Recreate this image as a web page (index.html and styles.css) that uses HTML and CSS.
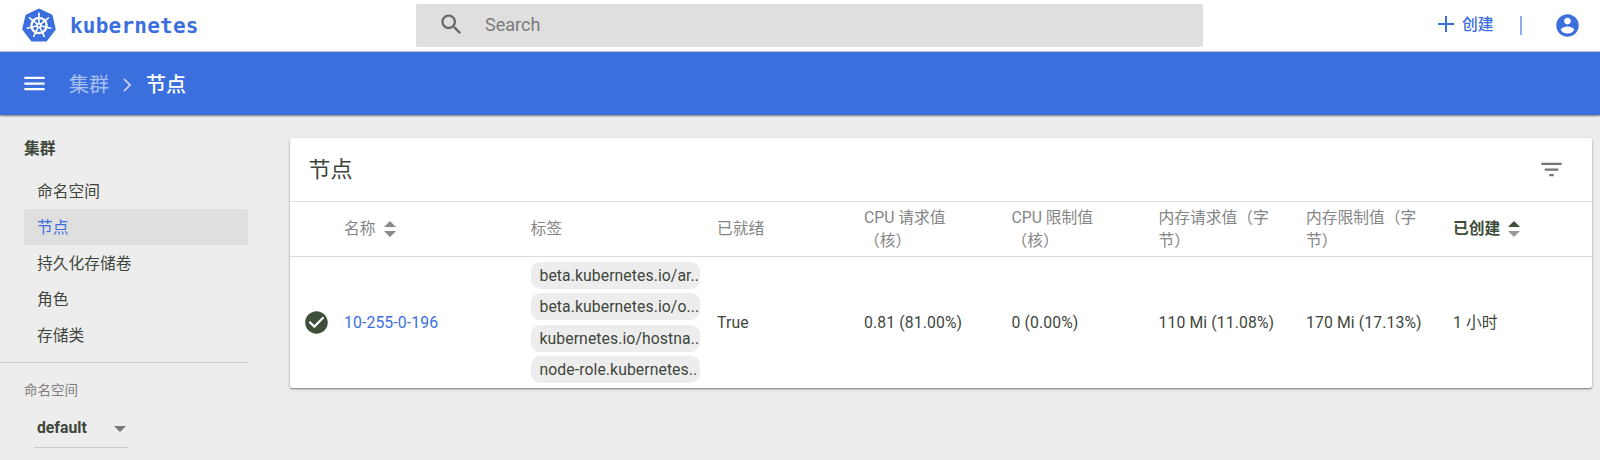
FILE: index.html
```html
<!DOCTYPE html>
<html lang="zh-CN">
<head>
<meta charset="utf-8">
<title>Kubernetes Dashboard</title>
<link rel="stylesheet" href="styles.css">
</head>
<body>
<header class="topbar">
  <div class="brand">
    <svg class="logo" viewBox="0 0 34 34">
      <path fill="#3b6fde" stroke="#3b6fde" stroke-width="3" stroke-linejoin="round" d="M17 2 29.1 7.8 32.2 21 23.8 32H10.2L1.8 21 4.9 7.8z"/>
      <g fill="none" stroke="#fff">
        <circle cx="17" cy="17.5" r="7.6" stroke-width="2.4"/>
        <g stroke-width="1.6" stroke-linecap="round">
          <path d="M17 15V5.4"/>
          <path d="M17 15V5.4" transform="rotate(51.43 17 17.5)"/>
          <path d="M17 15V5.4" transform="rotate(102.86 17 17.5)"/>
          <path d="M17 15V5.4" transform="rotate(154.29 17 17.5)"/>
          <path d="M17 15V5.4" transform="rotate(205.71 17 17.5)"/>
          <path d="M17 15V5.4" transform="rotate(257.14 17 17.5)"/>
          <path d="M17 15V5.4" transform="rotate(308.57 17 17.5)"/>
        </g>
      </g>
      <circle cx="17" cy="17.5" r="2.8" fill="#fff"/>
      <circle cx="17" cy="17.5" r="1" fill="#3b6fde"/>
    </svg>
    <span class="wordmark">kubernetes</span>
  </div>
  <div class="search">
    <svg class="icon-27" viewBox="0 0 24 24"><path fill="#666" d="M15.5 14h-.79l-.28-.27C15.41 12.59 16 11.11 16 9.5 16 5.91 13.09 3 9.5 3S3 5.91 3 9.5 5.91 16 9.5 16c1.61 0 3.09-.59 4.23-1.57l.27.28v.79l5 4.99L20.49 19l-4.99-5zm-6 0C7.01 14 5 11.99 5 9.5S7.01 5 9.5 5 14 7.01 14 9.5 11.99 14 9.5 14z"/></svg>
    <span class="search-text">Search</span>
  </div>
  <div class="actions">
    <svg class="plus" viewBox="0 0 16 16"><path fill="none" stroke="#3b6fde" stroke-width="2" d="M8 0v16M0 8h16"/></svg>
    <span class="create">创建</span>
    <span class="divider"></span>
    <svg class="icon-27" viewBox="0 0 24 24"><path fill="#3b6fde" d="M12 2C6.48 2 2 6.48 2 12s4.48 10 10 10 10-4.48 10-10S17.52 2 12 2zm0 3c1.66 0 3 1.34 3 3s-1.34 3-3 3-3-1.34-3-3 1.34-3 3-3zm0 14.2c-2.5 0-4.71-1.28-6-3.22.03-1.99 4-3.08 6-3.08 1.99 0 5.97 1.09 6 3.08-1.29 1.94-3.5 3.22-6 3.22z"/></svg>
  </div>
</header>
<nav class="crumbs">
  <svg class="icon-27" viewBox="0 0 24 24"><path fill="#fff" d="M3 18h18v-2H3v2zm0-5h18v-2H3v2zm0-7v2h18V6H3z"/></svg>
  <span class="crumb-parent">集群</span>
  <svg class="chevron" viewBox="0 0 8 14"><path fill="none" stroke="#fff" stroke-opacity=".75" stroke-width="1.7" d="M1 1l6 6-6 6"/></svg>
  <span class="crumb-current">节点</span>
</nav>
<div class="layout">
  <aside class="sidebar">
    <div class="side-title">集群</div>
    <ul class="menu">
      <li>命名空间</li>
      <li class="active">节点</li>
      <li>持久化存储卷</li>
      <li>角色</li>
      <li>存储类</li>
    </ul>
    <div class="side-rule"></div>
    <div class="ns-label">命名空间</div>
    <div class="select"><span>default</span><span class="caret"></span></div>
  </aside>
  <main class="card">
    <div class="card-head">
      <h2>节点</h2>
      <svg class="icon-27" viewBox="0 0 24 24"><path fill="#747474" d="M10 18h4v-2h-4v2zM3 6v2h18V6H3zm3 7h12v-2H6v2z"/></svg>
    </div>
    <div class="row head-row">
      <div></div>
      <div class="sortable">名称<svg class="sort" viewBox="0 0 12 16"><path fill="#8a8a8a" d="M0 6 6 0l6 6zM0 10l6 6 6-6z"/></svg></div>
      <div>标签</div>
      <div>已就绪</div>
      <div>CPU 请求值<br>（核）</div>
      <div>CPU 限制值<br>（核）</div>
      <div>内存请求值（字<br>节）</div>
      <div>内存限制值（字<br>节）</div>
      <div class="sortable sorted">已创建<svg class="sort" viewBox="0 0 12 16"><path fill="#3e4e38" d="M0 6 6 0l6 6z"/><path fill="#9a9a9a" d="M0 10l6 6 6-6z"/></svg></div>
    </div>
    <div class="row body-row">
      <div class="status"><svg class="icon-27" viewBox="0 0 24 24"><path fill="#3e4e38" d="M12 2C6.48 2 2 6.48 2 12s4.48 10 10 10 10-4.48 10-10S17.52 2 12 2zm-2 15l-5-5 1.41-1.41L10 14.17l7.59-7.59L19 8l-9 9z"/></svg></div>
      <div class="value link">10-255-0-196</div>
      <div class="tags">
        <span class="tag">beta.kubernetes.io/ar..</span>
        <span class="tag">beta.kubernetes.io/o...</span>
        <span class="tag">kubernetes.io/hostna..</span>
        <span class="tag">node-role.kubernetes..</span>
      </div>
      <div class="value">True</div>
      <div class="value">0.81 (81.00%)</div>
      <div class="value">0 (0.00%)</div>
      <div class="value">110 Mi (11.08%)</div>
      <div class="value">170 Mi (17.13%)</div>
      <div class="value">1 小时</div>
    </div>
  </main>
</div>
</body>
</html>
```
FILE: styles.css
```css
* { box-sizing: border-box; }
body {
  margin: 0;
  height: 460px;
  overflow: hidden;
  background: #ededed;
  color: #3e463c;
  font: 15.75px/22.5px Roboto, "Noto Sans CJK SC", sans-serif;
}
svg { display: block; flex: none; }
.icon-27 { width: 27px; height: 27px; }

.topbar {
  display: grid;
  grid-template-columns: 416px 787px 1fr;
  height: 52px;
  background: #fff;
  border-bottom: 1px solid #c5cbd8;
}
.brand { display: flex; align-items: center; padding-left: 22px; }
.logo { width: 34px; height: 34px; margin-top: -1px; }
.wordmark {
  margin-left: 14px;
  color: #3b6fde;
  font: bold 21px/30px "DejaVu Sans Mono", monospace;
  letter-spacing: .22px;
}
.search {
  display: flex;
  align-items: center;
  height: 43px;
  margin-top: 4px;
  padding-left: 22px;
  background: #dfdfdf;
  border-radius: 2px;
}
.search-text { margin-left: 20px; color: #7b7b7b; font-size: 18px; }
.search .icon-27 { margin-top: -2px; }
.actions { display: flex; align-items: center; padding: 0 19px 0 235px; color: #3b6fde; }
.plus { width: 16px; height: 16px; margin-top: -3px; }
.create { margin-left: 8px; font-weight: 500; }
.divider { width: 2px; height: 19px; margin-left: 26px; background: #8fadea; }
.actions .icon-27 { margin-left: auto; }

.crumbs {
  display: flex;
  align-items: center;
  height: 62.5px;
  padding-left: 21px;
  background: #3b6fde;
  color: #fff;
  font-size: 20px;
  box-shadow: 0 1px 2px rgba(0, 0, 0, .5);
}
.crumb-parent { margin-left: 21px; padding-top: 4px; color: #a9c0f1; }
.chevron { width: 8px; height: 14px; margin: 4px 15px 0 14px; }
.crumb-current { padding-top: 4px; font-weight: 500; }

.layout { display: grid; grid-template-columns: 289.5px 1302px; padding-top: 23.5px; }
.sidebar { width: 248px; }
.side-title { padding-left: 24px; font-weight: 700; line-height: 22px; }
.menu { margin: 13px 0 0 24px; padding: 0; list-style: none; }
.menu li { height: 36px; padding-left: 13px; line-height: 37px; }
.menu .active { background: #dfdfdf; color: #3b6fde; border-radius: 2px; }
.side-rule { height: 1px; margin-top: 9px; background: #ccc; }
.ns-label { margin: 16px 0 0 24px; color: #808080; font-size: 13.5px; }
.select {
  display: flex;
  align-items: center;
  justify-content: space-between;
  width: 94px;
  height: 40px;
  margin: 6px 0 0 34px;
  padding: 3px 2px 0 3px;
  border-bottom: 1px solid #ccc;
  font-weight: 700;
}
.caret { border: 6px solid transparent; border-top-color: #777; border-bottom: 0; }

.card {
  height: 250px;
  background: #fff;
  border-radius: 2px;
  box-shadow: 0 1px 3px rgba(0, 0, 0, .3), 0 1px 1px rgba(0, 0, 0, .25);
}
.card-head {
  display: flex;
  align-items: center;
  justify-content: space-between;
  height: 64px;
  padding: 0 27px 0 19px;
  border-bottom: 1px solid #e2e2e2;
}
h2 { margin: 0; padding-top: 2px; font-size: 22px; font-weight: 400; }
.row {
  display: grid;
  grid-template-columns: 54.5px 186.5px 186.5px 147px 147.5px 147px 147.5px 147px 1fr;
  align-items: center;
  white-space: nowrap;
}
.head-row { height: 55px; padding-top: 1px; border-bottom: 1px solid #ddd; color: #858585; }
.sortable { display: flex; align-items: center; }
.sort { width: 12px; height: 16px; margin: -1px 0 0 8px; }
.sorted { color: #3e4e38; font-weight: 700; }
.body-row { height: 131px; }
.status { padding-left: 13px; }
.value { padding-top: 2px; letter-spacing: .12px; }
.link { color: #3b6fde; }
.tags { display: grid; gap: 4.5px; }
.tag {
  width: 169px;
  height: 27px;
  padding-left: 9px;
  border-radius: 9px;
  background: #ededed;
  line-height: 27px;
  letter-spacing: .08px;
}
```
